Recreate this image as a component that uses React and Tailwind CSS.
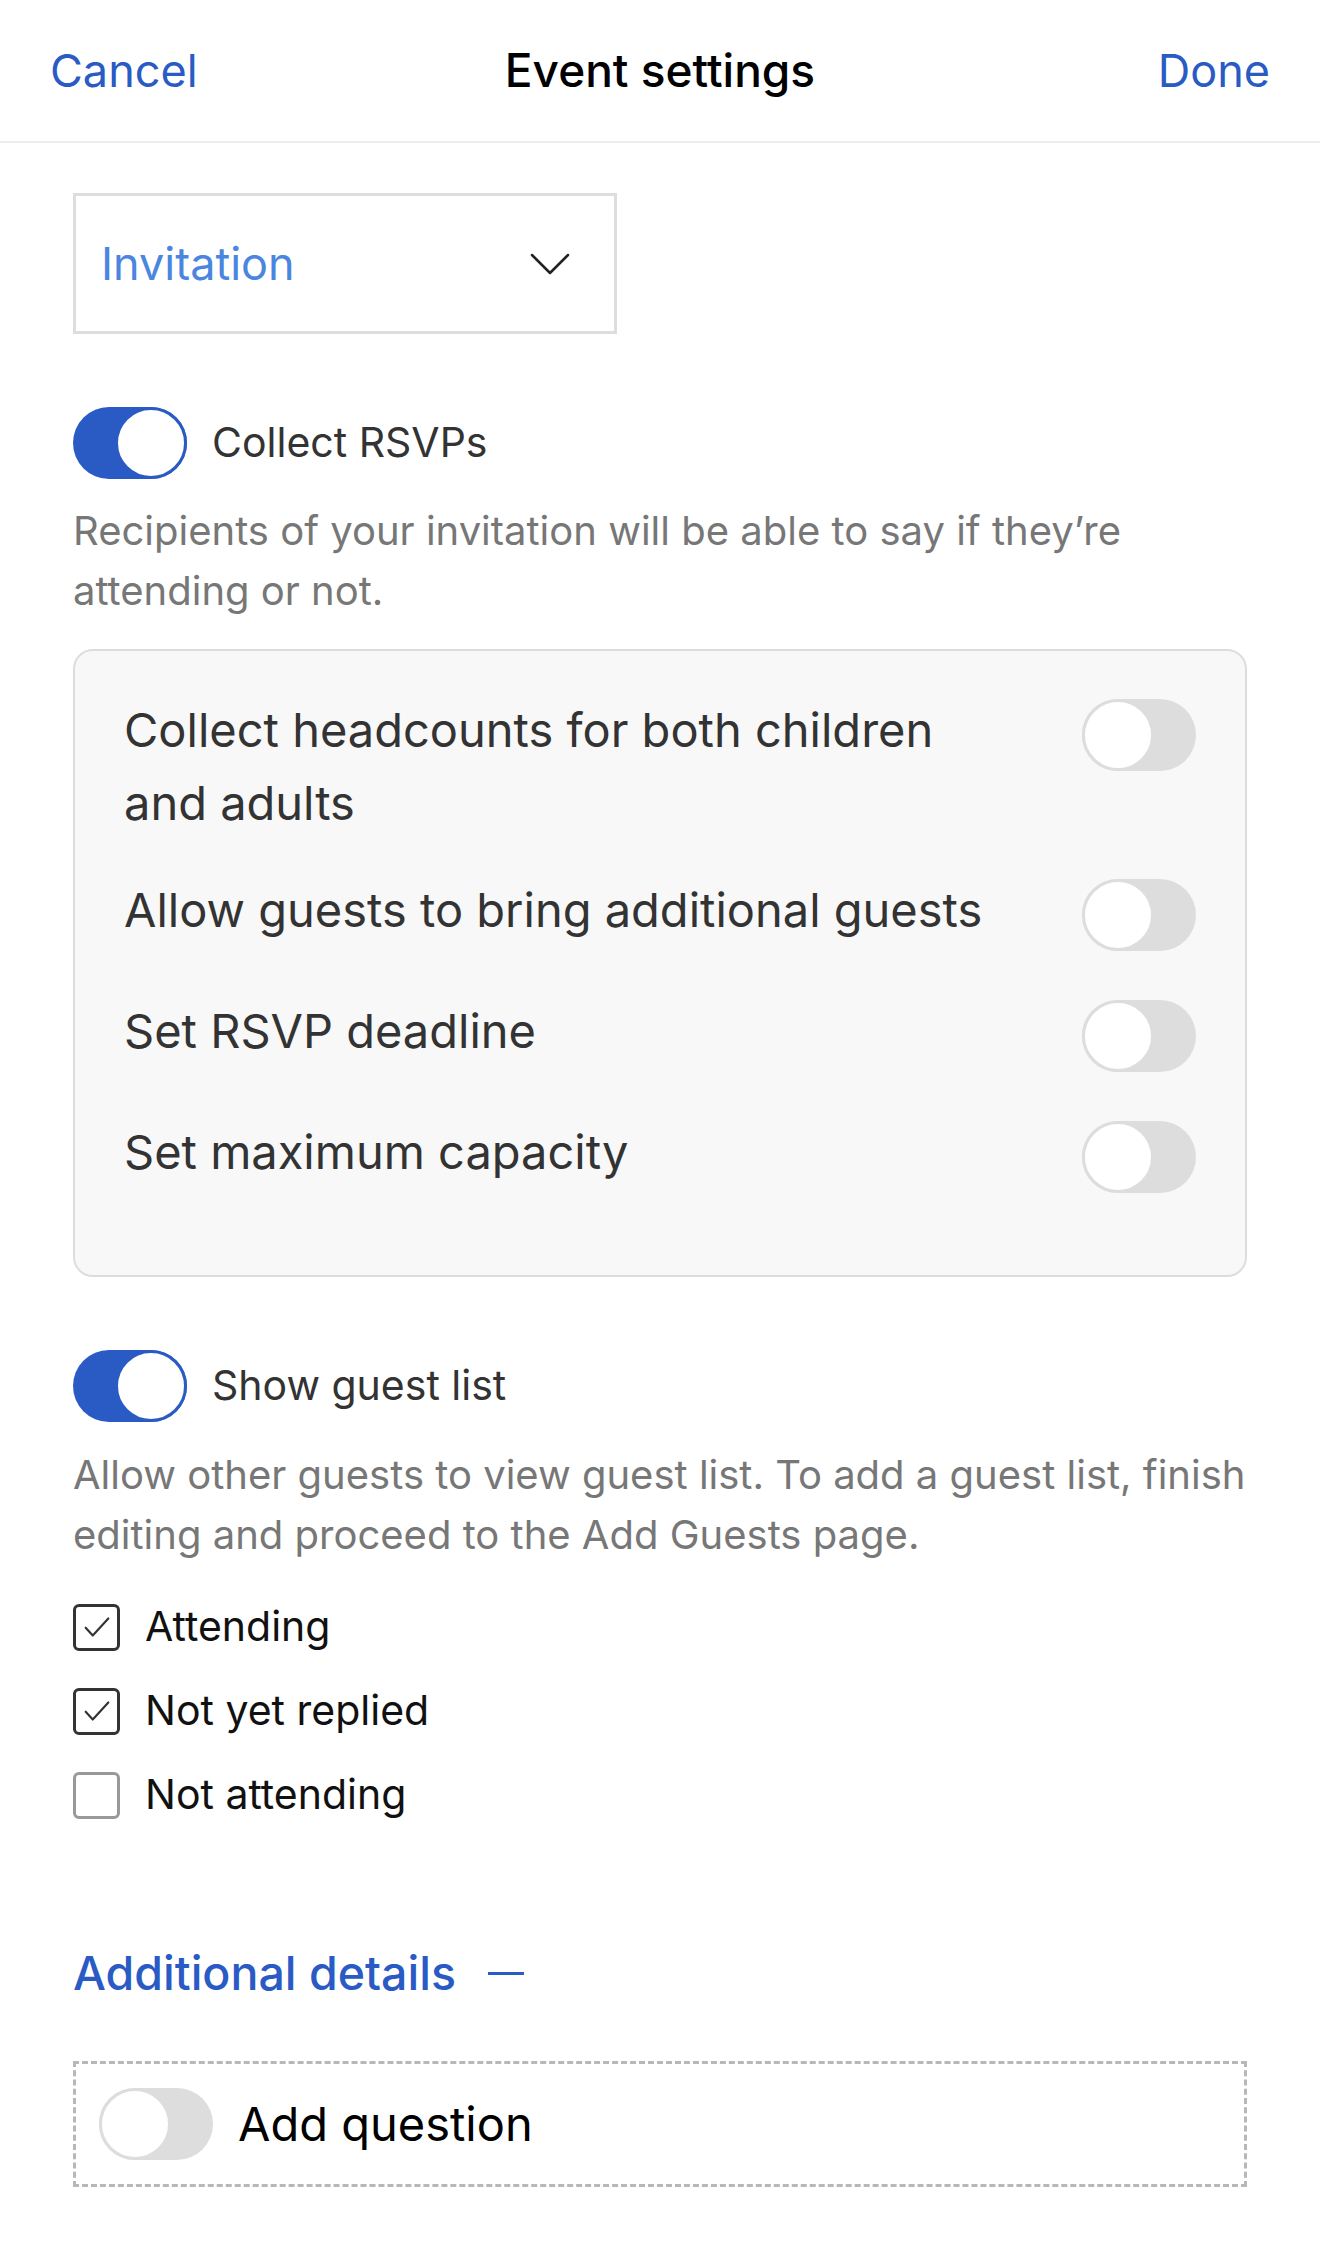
function Toggle({ on }) {
  return (
    <div
      className={`relative h-[72px] w-[114px] shrink-0 rounded-full ${
        on ? "bg-[#2a5bc4]" : "bg-[#dddddd]"
      }`}
    >
      <div
        className={`absolute top-0 h-[72px] w-[72px] rounded-full bg-white border-[3px] ${
          on ? "right-0 border-[#2a5bc4]" : "left-0 border-[#dddddd]"
        }`}
      />
    </div>
  );
}

function Checkbox({ checked, label }) {
  return (
    <div className="flex items-center h-[48px]">
      <div
        className={`flex items-center justify-center h-[47px] w-[47px] rounded-[6px] border-[3px] ${
          checked ? "border-[#333]" : "border-[#999]"
        }`}
      >
        {checked && (
          <svg width="34" height="34" viewBox="0 0 24 24" fill="none" stroke="#333" strokeWidth="1.5" strokeLinecap="round" strokeLinejoin="round">
            <path d="M4 12.5l5 5.5L20 6" />
          </svg>
        )}
      </div>
      <span className="ml-[25px] text-[41px] text-[#111]">{label}</span>
    </div>
  );
}

function App() {
  return (
    <div className="min-h-screen bg-white font-['Inter',sans-serif]">
      {/* Header */}
      <div className="grid h-[143px] grid-cols-3 items-center border-b-2 border-[#ececec] px-[50px]">
        <button className="justify-self-start text-[45px] text-[#2a5bc4]">Cancel</button>
        <h1 className="justify-self-center whitespace-nowrap text-[46px] font-medium text-black">Event settings</h1>
        <button className="justify-self-end text-[45px] text-[#2a5bc4]">Done</button>
      </div>

      <div className="px-[73px] pt-[50px] pb-[56px]">
        {/* Dropdown */}
        <div className="flex h-[141px] w-[544px] items-center justify-between border-[3px] border-[#dddddd] pl-[25px] pr-[44px]">
          <span className="text-[45px] text-[#4a86e0]">Invitation</span>
          <svg width="40" height="24" viewBox="0 0 40 24" fill="none" stroke="#222" strokeWidth="2.5" strokeLinecap="round" strokeLinejoin="round">
            <path d="M2 3l18 18L38 3" />
          </svg>
        </div>

        {/* Collect RSVPs */}
        <div className="mt-[73px] flex items-center gap-[25px]">
          <Toggle on />
          <span className="text-[41px] text-[#333]">Collect RSVPs</span>
        </div>
        <p className="mt-[22px] text-[40px] leading-[60px] text-[#777]">
          Recipients of your invitation will be able to say if they’re attending or not.
        </p>

        <div className="mt-[28px] rounded-[20px] border-2 border-[#dddddd] bg-[#f8f8f8] pl-[49px] pr-[49px] pt-[42px] pb-[82px]">
          <div className="flex items-start justify-between">
            <span className="w-[830px] text-[47px] leading-[73px] text-[#333]">
              Collect headcounts for both children and adults
            </span>
            <div className="mt-[6px]"><Toggle /></div>
          </div>
          <div className="mt-[34px] flex items-start justify-between">
            <span className="text-[47px] leading-[73px] text-[#333]">Allow guests to bring additional guests</span>
            <div className="mt-[6px]"><Toggle /></div>
          </div>
          <div className="mt-[43px] flex items-start justify-between">
            <span className="text-[47px] leading-[73px] text-[#333]">Set RSVP deadline</span>
            <div className="mt-[6px]"><Toggle /></div>
          </div>
          <div className="mt-[43px] flex items-start justify-between">
            <span className="text-[47px] leading-[73px] text-[#333]">Set maximum capacity</span>
            <div className="mt-[6px]"><Toggle /></div>
          </div>
        </div>

        {/* Show guest list */}
        <div className="mt-[73px] flex items-center gap-[25px]">
          <Toggle on />
          <span className="text-[41px] text-[#333]">Show guest list</span>
        </div>
        <p className="mt-[23px] text-[40px] leading-[60px] text-[#777]">
          Allow other guests to view guest list. To add a guest list, finish editing and proceed to the Add Guests page.
        </p>

        <div className="mt-[38px] flex flex-col gap-[36px]">
          <Checkbox checked label="Attending" />
          <Checkbox checked label="Not yet replied" />
          <Checkbox label="Not attending" />
        </div>

        {/* Additional details */}
        <div className="mt-[124px] flex items-center gap-[32px] text-[#2a5bc4]">
          <span className="text-[46.5px] font-medium leading-[60px]">Additional details</span>
          <span className="block h-[3px] w-[36px] bg-[#2a5bc4]" />
        </div>

        <div className="mt-[58px] flex h-[126px] items-center gap-[25px] border-[3px] border-dashed border-[#b8b8b8] pl-[23px]">
          <Toggle />
          <span className="text-[47px] text-black">Add question</span>
        </div>
      </div>
    </div>
  );
}

export default App;
